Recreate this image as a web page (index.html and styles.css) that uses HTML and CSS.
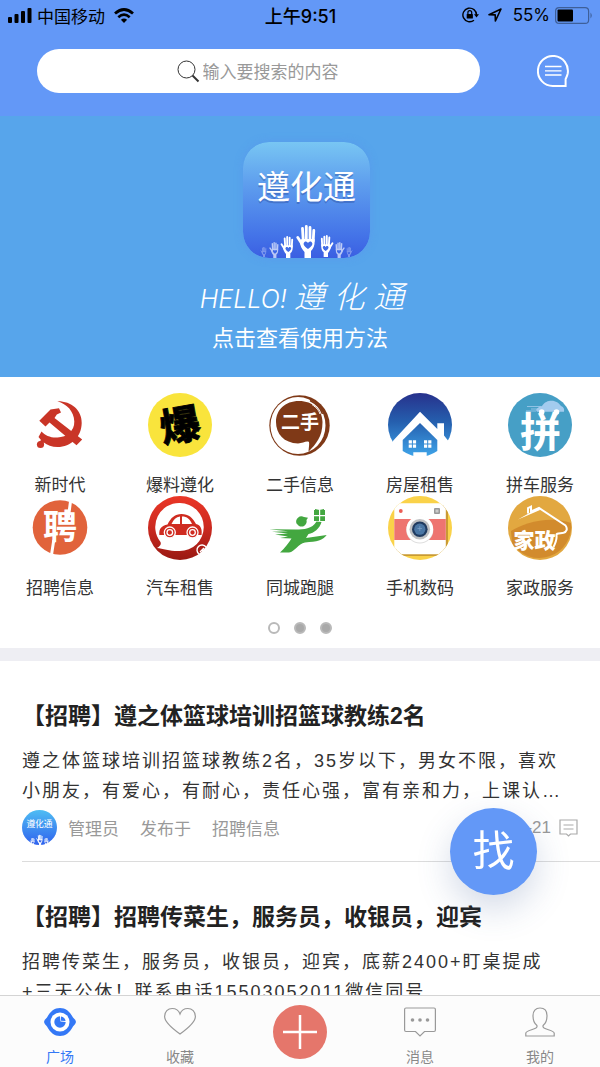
FILE: index.html
```html
<!DOCTYPE html>
<html lang="zh-CN">
<head>
    <meta charset="UTF-8">
    <meta name="viewport" content="width=device-width, initial-scale=1.0">
    <title>遵化通</title>
    <link rel="stylesheet" href="styles.css">
</head>
<body>
    <!-- Shared shapes -->
    <svg class="defs" width="0" height="0" aria-hidden="true">
        <defs>
            <linearGradient id="logoBg" x1="0" y1="0" x2="0" y2="1">
                <stop offset="0" stop-color="#78c6f3"/>
                <stop offset="0.35" stop-color="#5f9fee"/>
                <stop offset="0.8" stop-color="#4474e8"/>
                <stop offset="1" stop-color="#3b5fe2"/>
            </linearGradient>
            <linearGradient id="avatarBg" x1="0" y1="0" x2="0" y2="1">
                <stop offset="0" stop-color="#4fbdf3"/>
                <stop offset="1" stop-color="#2f62ee"/>
            </linearGradient>
            <linearGradient id="houseBg" gradientUnits="userSpaceOnUse" x1="0" y1="0" x2="0" y2="64">
                <stop offset="0" stop-color="#27318c"/>
                <stop offset="0.45" stop-color="#255fae"/>
                <stop offset="1" stop-color="#3fa5ea"/>
            </linearGradient>
            <linearGradient id="carBg" x1="0" y1="0" x2="0" y2="1">
                <stop offset="0" stop-color="#ea3626"/>
                <stop offset="0.5" stop-color="#cb2a20"/>
                <stop offset="1" stop-color="#991812"/>
            </linearGradient>
            <symbol id="hand" viewBox="0 0 20 33">
                <path d="M1.800 12.500L6 19M6.500 3.500L7.200 15M10.300 1.500V14M14 2.500V14M17.800 5.500L17.200 16" fill="none" stroke="#fff" stroke-width="2.800" stroke-linecap="round"/>
                <path d="M5.500 14H18.600C19 20 18 23 15 26V33H8.500V27C6 24 4 21 4 17Z" fill="#fff"/>
                <path d="M12 24C8 21.500 6.500 18.500 8.500 17C10 16 11.500 17 12 18.200C12.500 17 14 16 15.500 17C17.500 18.500 16 21.500 12 24Z" fill="#416ce6"/>
            </symbol>
            <clipPath id="round"><circle cx="32" cy="32" r="32"/></clipPath>
        </defs>
    </svg>

    <div class="app">
        <header class="header">
            <div class="status-bar">
                <div class="status-left">
                    <svg width="24" height="16" viewBox="0 0 24 16">
                        <rect x="0" y="10" width="4" height="6" rx="1"/>
                        <rect x="6.500" y="7" width="4" height="9" rx="1"/>
                        <rect x="13" y="4" width="4" height="12" rx="1"/>
                        <rect x="19.500" y="1" width="4" height="15" rx="1"/>
                    </svg>
                    <span>中国移动</span>
                    <svg class="wifi" width="20" height="15" viewBox="0 0 20 15">
                        <path d="M1 5.500Q10 -2.500 19 5.500" fill="none" stroke="#000" stroke-width="2.800"/>
                        <path d="M4.300 9.200Q10 4 15.700 9.200" fill="none" stroke="#000" stroke-width="2.600"/>
                        <path d="M6.900 11.800Q10 9 13.100 11.800L10 15Z"/>
                    </svg>
                </div>
                <div class="status-time">上午9:51</div>
                <div class="status-right">
                    <svg width="17" height="16" viewBox="0 0 17 16">
                        <path d="M14.500 8A6.800 6.800 0 1 0 12 13.200" fill="none" stroke="#000" stroke-width="1.400"/>
                        <path d="M12 7.300H17L14.500 10.500Z"/>
                        <rect x="4.700" y="7" width="6.200" height="4.600" rx="0.600"/>
                        <path d="M5.900 7V5.600A1.900 1.900 0 0 1 9.700 5.600V7" fill="none" stroke="#000" stroke-width="1.200"/>
                    </svg>
                    <svg class="locate" width="14" height="14" viewBox="0 0 14 14">
                        <path d="M1 6.800L13 1L7.400 13L7.200 6.900Z" fill="none" stroke="#000" stroke-width="1.600" stroke-linejoin="round"/>
                    </svg>
                    <span class="percent">55%</span>
                    <svg width="38" height="17" viewBox="0 0 38 17">
                        <rect x="0.600" y="0.600" width="33" height="15.800" rx="3.500" fill="none" stroke="#3e5f99" stroke-width="1.200"/>
                        <rect x="2.500" y="2.500" width="15.500" height="12" rx="1"/>
                        <path d="M35.500 5.500Q38 8.500 35.500 11.500Z" fill="#3e5f99"/>
                    </svg>
                </div>
            </div>
            <div class="search-row">
                <label class="search">
                    <svg width="23" height="23" viewBox="0 0 23 23" fill="none" stroke="#333">
                        <circle cx="9.500" cy="9.500" r="8.500" stroke-width="1"/>
                        <path d="M15.500 15.500L21.500 21.500" stroke-width="1.900"/>
                    </svg>
                    <input class="search-input" type="text" placeholder="输入要搜索的内容" aria-label="搜索">
                </label>
                <button class="msg-btn" aria-label="消息">
                    <svg width="32" height="32" viewBox="0 0 32 32" fill="none" stroke="#fff">
                        <path d="M16 31A15 15 0 1 1 30.700 18.500C30.200 21 29.200 22.800 28.600 24.200V31Z" stroke-width="2"/>
                        <path d="M8 11.500H24.500M8 15.800H24.500M8 20H24.500" stroke-width="1.300"/>
                    </svg>
                </button>
            </div>
        </header>

        <main class="content">
            <a class="banner" href="#">
                <svg class="banner-logo" width="127" height="116" viewBox="0 0 127 116">
                    <rect width="127" height="116" rx="26" fill="url(#logoBg)"/>
                    <text class="logo-shadow" x="63.500" y="59" text-anchor="middle" font-size="33">遵化通</text>
                    <text x="63.500" y="57" text-anchor="middle" font-size="33" fill="#fff">遵化通</text>
                    <use href="#hand" x="53" y="83" width="20" height="33"/>
                    <use href="#hand" x="37" y="94" width="14" height="22"/>
                    <use href="#hand" x="-91" y="93" width="14" height="22" transform="scale(-1 1)"/>
                    <use href="#hand" x="26" y="100" width="10" height="16" opacity="0.650"/>
                    <use href="#hand" x="-102" y="100" width="10" height="16" transform="scale(-1 1)" opacity="0.650"/>
                    <use href="#hand" x="17" y="105" width="7" height="10" opacity="0.350"/>
                    <use href="#hand" x="-110" y="105" width="7" height="10" transform="scale(-1 1)" opacity="0.350"/>
                </svg>
                <div class="banner-hello">HELLO! <span>遵 化 通</span></div>
                <div class="banner-tip">点击查看使用方法</div>
            </a>

            <section class="menu">
                <nav class="menu-grid">
                    <a class="menu-item" href="#">
                        <svg viewBox="0 0 64 64" fill="#c93527">
                            <path d="M29.300 8.300C43 8 54 17 53.700 30C53.500 44 43 54 29.500 54C24 54 19 52 15.800 49.500L12 54L9.500 51L13 47L10.500 44L13.500 38.500C17 42.500 23 45 29.500 44.500C39 44 46.500 38 46.300 28.500C46 18.500 39 11 29.300 8.300Z"/>
                            <circle cx="12.500" cy="51.500" r="3.600"/>
                            <path d="M11.300 27.700L22.500 16.500L31 15.200L33 19.500L28.800 21.500L26.500 25L54.200 46.500L48.500 52.300L21.500 29.500L17.500 33.500Z"/>
                        </svg>
                        <span>新时代</span>
                    </a>
                    <a class="menu-item" href="#">
                        <svg viewBox="0 0 64 64">
                            <circle cx="32" cy="32" r="32" fill="#f9e43c"/>
                            <text x="32" y="47" text-anchor="middle" font-size="40" font-weight="900" stroke="#000" stroke-width="0.800" transform="rotate(-10 32 32)">爆</text>
                        </svg>
                        <span>爆料遵化</span>
                    </a>
                    <a class="menu-item" href="#">
                        <svg viewBox="0 0 64 64">
                            <circle cx="31.500" cy="32.500" r="30.200" fill="#7f3917"/>
                            <ellipse cx="30" cy="32.500" rx="27.500" ry="28.500" fill="#fff"/>
                            <path d="M31 8C45 8 54.500 17 54.500 29C54.500 44 48 51 40.500 58.700C40.800 54 41.500 51.500 41 49C38 47.500 35 50.500 30 50.500C16 50 8 41 8 29C8 17 17 8 31 8Z" fill="#7f3917"/>
                            <path d="M42 7.500C49 11 53 16 54.500 21" fill="none" stroke="#7f3917" stroke-width="1.500"/>
                            <path d="M44 11.500C49 15 51 18 52 21" fill="none" stroke="#fff" stroke-width="1"/>
                            <text x="32" y="36" text-anchor="middle" font-size="19" font-weight="700" fill="#fff">二手</text>
                        </svg>
                        <span>二手信息</span>
                    </a>
                    <a class="menu-item" href="#">
                        <svg viewBox="0 0 64 64">
                            <circle cx="32" cy="32" r="32" fill="url(#houseBg)"/>
                            <path d="M32 18.700L49.300 36V30.300H56V42.500L61 48.700L64 64H0L5.300 47.500Z" fill="#fff"/>
                            <path d="M32 30L49.300 47V58Q41 63.500 32 64Q23 63.500 14.700 58V47Z" fill="url(#houseBg)"/>
                            <path d="M0 64L2 50L7 50L8 52V64ZM64 64V50H60V64Z" fill="#fff"/>
                            <path d="M20.700 47.300h3.200v3.200h-3.200zM24.900 47.300h3.200v3.200h-3.200zM20.700 51.500h3.200v3.200h-3.200zM24.900 51.500h3.200v3.200h-3.200zM36 47.300h3.200v3.200h-3.200zM40.200 47.300h3.200v3.200h-3.200zM36 51.500h3.200v3.200h-3.200zM40.200 51.500h3.200v3.200h-3.200zM25.300 59.300h13.400V64h-13.400z" fill="#fff"/>
                        </svg>
                        <span>房屋租售</span>
                    </a>
                    <a class="menu-item" href="#">
                        <svg viewBox="0 0 64 64">
                            <circle cx="32" cy="32" r="32" fill="#469fc6"/>
                            <text x="32.500" y="54" text-anchor="middle" font-size="41" font-weight="700" fill="#fff">拼</text>
                            <path d="M28 17C29 14.500 32 13.500 34 13C36.500 9 40 7.700 43.500 7.700C48 7.700 51 10 53 13C56 14 56.500 16.500 56 18.700H29Z" fill="#a3cbee"/>
                            <path d="M19 13.500H33M23 16H30M18 18H28" stroke="#a3cbee" stroke-width="0.800"/>
                            <circle cx="33.700" cy="19" r="2.800" fill="#fff"/>
                            <circle cx="48.500" cy="19" r="2.800" fill="#fff"/>
                        </svg>
                        <span>拼车服务</span>
                    </a>
                    <a class="menu-item" href="#">
                        <svg viewBox="0 0 64 64">
                            <circle cx="32" cy="31.500" r="27.300" fill="#e1633b"/>
                            <path d="M42.700 4L40.300 22M25.800 44L23.300 60" stroke="#fff" stroke-width="3"/>
                            <text x="32" y="43" text-anchor="middle" font-size="34" font-weight="700" fill="#fff">聘</text>
                        </svg>
                        <span>招聘信息</span>
                    </a>
                    <a class="menu-item" href="#">
                        <svg viewBox="0 0 64 64">
                            <circle cx="32" cy="32" r="32" fill="url(#carBg)"/>
                            <path d="M32 7A24 24 0 1 1 31.500 55C23 55.500 15 52.500 9 52C12 50 13.500 48.500 12.500 46A24 24 0 0 1 32 7Z" fill="#fff"/>
                            <path d="M11.300 39C11 32 13.500 30 19.500 28.500C23 21.500 27 18 33.500 18C40.500 18 44.500 21.500 48 28C52.500 29 54.500 33 53.500 39Z" fill="#cf2b20"/>
                            <path d="M23.500 28C25.500 23.500 28 21 32 20.500V28ZM34 20.500C39 20.500 42 23 44 28H34Z" fill="#fff"/>
                            <g fill="#cf2b20" stroke="#fff" stroke-width="1.300">
                                <circle cx="21.800" cy="36.500" r="5.500"/>
                                <circle cx="44.500" cy="36.500" r="5.500"/>
                                <circle cx="21.800" cy="36.500" r="2.800"/>
                                <circle cx="44.500" cy="36.500" r="2.800"/>
                            </g>
                            <path d="M51 58A5 5 0 1 1 58 51M52 56L56 52M54 55L57 54" fill="none" stroke="#fff" stroke-width="1.400"/>
                        </svg>
                        <span>汽车租售</span>
                    </a>
                    <a class="menu-item" href="#">
                        <svg viewBox="0 0 64 64" fill="#43a740">
                            <path d="M28.500 27.500A5.300 5.300 0 0 1 36 21L40 21.800L38.500 24A5.300 5.300 0 0 1 31 30Z"/>
                            <path d="M46 14H51V19H46ZM52.200 14H57V19H52.200ZM46 20.200H51V25H46ZM52.200 20.200H57V25H52.200ZM47 13L51.500 14L56 13V14H47Z"/>
                            <path d="M1.300 33.200L28 33.500C36 33.500 44 33 48.500 25.500L53.500 26C51.500 33 46 37 40.500 38L38 42L58.700 39C55 44.500 49 45.500 37 46.500C30 47.500 27 56 21 56.400H12C17 52 21 46.500 23.500 42.500L12 42L20 40.500L7 38.500L20 37.500L4 35.800L20 35.300Z"/>
                        </svg>
                        <span>同城跑腿</span>
                    </a>
                    <a class="menu-item" href="#">
                        <svg viewBox="0 0 64 64">
                            <g clip-path="url(#round)">
                                <rect width="64" height="64" fill="#fad249"/>
                                <rect x="8" y="9" width="52" height="51" rx="4" fill="#c99a34"/>
                                <rect x="6.300" y="7.300" width="51.500" height="51" rx="4" fill="#fff"/>
                                <rect x="6.300" y="23" width="51.500" height="21" fill="#ee7470"/>
                            </g>
                            <circle cx="31.800" cy="34" r="13.500" fill="#ddd"/>
                            <circle cx="31.800" cy="33.200" r="13.300" fill="#fff"/>
                            <circle cx="31.800" cy="33.200" r="10.300" fill="#bfc0c2"/>
                            <circle cx="31.800" cy="33.200" r="7.800" fill="#203b60"/>
                            <circle cx="31.800" cy="33.200" r="5.600" fill="#4a76a4"/>
                            <path d="M29.500 32.500H34M31.800 30V35" stroke="#7ba0c6" stroke-width="0.800"/>
                            <circle cx="12.800" cy="15" r="1.900" fill="#ec5d55"/>
                            <rect x="46" y="12" width="6" height="6" rx="1" fill="#999"/>
                            <rect x="47.500" y="13.500" width="3" height="3" fill="#ccc"/>
                        </svg>
                        <span>手机数码</span>
                    </a>
                    <a class="menu-item" href="#">
                        <svg viewBox="0 0 64 64">
                            <circle cx="32" cy="32" r="32" fill="#e2a840"/>
                            <path d="M3 35C15 27 42 19 63 27A32 32 0 0 1 4 47Z" fill="#d28b2d" clip-path="url(#round)"/>
                            <path d="M20 17.500V12L23 10.500V15.500L31 12L57.500 29.500C60 33 58.500 36 55.500 36.800C51 37.500 48 37 48.500 39.500C49 43 47 48 45.500 51" fill="none" stroke="#fff" stroke-width="2"/>
                            <path d="M10 23.500L31 11.500L32 14Z" fill="#fff"/>
                            <text x="26.500" y="51.500" text-anchor="middle" font-size="21" font-weight="900" fill="#fff">家政</text>
                        </svg>
                        <span>家政服务</span>
                    </a>
                </nav>
                <div class="dots">
                    <span class="dot current"></span>
                    <span class="dot"></span>
                    <span class="dot"></span>
                </div>
            </section>

            <section class="feed">
                <article class="post">
                    <h2 class="post-title">【招聘】遵之体篮球培训招篮球教练2名</h2>
                    <p class="post-text">遵之体篮球培训招篮球教练2名，35岁以下，男女不限，喜欢<br>小朋友，有爱心，有耐心，责任心强，富有亲和力，上课认…</p>
                    <div class="post-meta">
                        <svg class="avatar" width="35" height="35" viewBox="0 0 64 64">
                            <g clip-path="url(#round)">
                                <rect width="64" height="64" fill="url(#avatarBg)"/>
                                <text x="32" y="31" text-anchor="middle" font-size="16" fill="#fff">遵化通</text>
                                <use href="#hand" x="25" y="45" width="14" height="20"/>
                                <use href="#hand" x="14" y="51" width="10" height="14"/>
                                <use href="#hand" x="-50" y="51" width="10" height="14" transform="scale(-1 1)"/>
                            </g>
                        </svg>
                        <span>管理员</span>
                        <span>发布于</span>
                        <span>招聘信息</span>
                        <span class="post-date">-21</span>
                        <svg class="comment" width="19" height="18" viewBox="0 0 19 18" fill="none" stroke="#aaa" stroke-width="1.200">
                            <path d="M1 1H18V15H11.500L9.500 17L7.500 15H1Z"/>
                            <path d="M4.500 6H14.500M4.500 10H14.500"/>
                        </svg>
                    </div>
                </article>
                <article class="post">
                    <h2 class="post-title">【招聘】招聘传菜生，服务员，收银员，迎宾</h2>
                    <p class="post-text">招聘传菜生，服务员，收银员，迎宾，底薪2400+盯桌提成<br>+三天公休！联系电话15503052011微信同号</p>
                </article>
            </section>
        </main>

        <nav class="tab-bar">
            <a class="tab active" href="#">
                <svg width="32" height="30" viewBox="0 0 32 30">
                    <path d="M0 15Q0.500 12.500 3 10.500C6.500 4 10.500 1 16 1C21.500 1 25.500 4 29 10.500Q31.500 12.500 32 15Q31.500 17.500 29 19.500C25.500 26 21.500 29 16 29C10.500 29 6.500 26 3 19.500Q0.500 17.500 0 15Z" fill="#3478f6"/>
                    <circle cx="16" cy="15" r="9.500" fill="#fff"/>
                    <path d="M16 9.300A5.700 5.700 0 1 0 21.700 15L16.500 14.500Z" fill="#3478f6"/>
                    <path d="M17 9.400A5.700 5.700 0 0 1 21.600 14L17 13.700Z" fill="#3478f6"/>
                </svg>
                <span>广场</span>
            </a>
            <a class="tab" href="#">
                <svg width="32" height="30" viewBox="0 0 32 30" fill="none" stroke="#999" stroke-width="1.200">
                    <path d="M16 27C9 22 0.600 15.500 0.600 9.500C0.600 4.500 4 1.500 8.200 1.500C11.800 1.500 14.800 3.800 16 7C17.200 3.800 20.200 1.500 23.800 1.500C28 1.500 31.400 4.500 31.400 9.500C31.400 15.500 23 22 16 27Z"/>
                </svg>
                <span>收藏</span>
            </a>
            <button class="add-btn" aria-label="发布">
                <svg width="34" height="34" viewBox="0 0 34 34" stroke="#fff" stroke-width="2.500">
                    <path d="M17 0V34M0 17H34"/>
                </svg>
            </button>
            <a class="tab" href="#">
                <svg width="32" height="30" viewBox="0 0 32 30" fill="none" stroke="#999" stroke-width="1.200">
                    <path d="M2 1H30Q31.400 1 31.400 2.500V23Q31.400 24.500 30 24.500H20.500L16 29L11.500 24.500H2Q0.600 24.500 0.600 23V2.500Q0.600 1 2 1Z"/>
                    <g fill="#999" stroke="none">
                        <circle cx="8.500" cy="13" r="1.800"/>
                        <circle cx="16" cy="13" r="1.800"/>
                        <circle cx="23.500" cy="13" r="1.800"/>
                    </g>
                </svg>
                <span>消息</span>
            </a>
            <a class="tab" href="#">
                <svg width="32" height="30" viewBox="0 0 32 30" fill="none" stroke="#999" stroke-width="1.200">
                    <path d="M16 1C20.500 1 23 4 23 8.500C23 13 21.500 16.500 19.500 18C18.500 19 19 20.500 20 21C23.500 22.800 30 24 30.200 26V29H1.800V26C2 24 8.500 22.800 12 21C13 20.500 13.500 19 12.500 18C10.500 16.500 9 13 9 8.500C9 4 11.500 1 16 1Z"/>
                </svg>
                <span>我的</span>
            </a>
        </nav>

        <button class="find-btn">找</button>
    </div>
</body>
</html>
```

FILE: styles.css
```css
* {
    margin: 0;
    padding: 0;
    box-sizing: border-box;
}

body {
    font-family: 'Liberation Sans', 'Noto Sans CJK SC', sans-serif;
    font-size: 17px;
    color: #333;
    background: #fff;
}

a {
    color: inherit;
    text-decoration: none;
}

button {
    border: none;
    font-family: inherit;
    cursor: pointer;
}

svg {
    display: block;
    flex-shrink: 0;
}

.defs {
    position: absolute;
}

.app {
    height: 100vh;
    display: flex;
    flex-direction: column;
}

/* Header */
.header {
    background: #6398f7;
    padding-bottom: 23px;
}

.status-bar {
    display: grid;
    grid-template-columns: 1fr auto 1fr;
    align-items: center;
    height: 30px;
    padding: 0 7px 0 8px;
    color: #000;
}

.status-left,
.status-right {
    display: flex;
    align-items: center;
    gap: 5px;
}

.status-left .wifi {
    margin-left: 4px;
}

.status-right {
    justify-content: flex-end;
}

.locate {
    margin: 0 6px 0 4px;
}

.status-time,
.percent {
    font-family: Inter, 'Noto Sans CJK SC', sans-serif;
}

.status-time {
    font-size: 18px;
    font-weight: 500;
}

.search-row {
    display: flex;
    align-items: center;
    gap: 57px;
    padding: 19px 31px 0 37px;
}

.search {
    flex: 1;
    display: flex;
    align-items: center;
    justify-content: center;
    gap: 3px;
    height: 44px;
    border-radius: 22px;
    background: #fff;
}

.search-input {
    width: 138px;
    height: 32px;
    padding-top: 4px;
    border: none;
    outline: none;
    background: none;
    font: inherit;
    color: #333;
}

.search-input::placeholder {
    color: #999;
}

.msg-btn {
    background: none;
}

/* Scrolling area */
.content {
    flex: 1;
    min-height: 0;
    overflow-y: auto;
    scrollbar-width: none;
}

.banner {
    display: flex;
    flex-direction: column;
    align-items: center;
    height: 261px;
    padding-top: 26px;
    background: #57a5eb;
    color: #fff;
}

.banner-logo {
    margin-left: 12px;
    border-radius: 26px;
    box-shadow: 0 0 8px rgba(90, 140, 240, 0.4);
}

.logo-shadow {
    fill: rgba(40, 70, 150, 0.4);
}

.banner-hello {
    margin: 18px 0 0 4px;
    font-family: Inter, 'Noto Sans CJK SC', sans-serif;
    font-size: 25px;
    font-weight: 300;
    font-style: italic;
    line-height: 42px;
}

.banner-hello span {
    font-size: 31px;
}

.banner-tip {
    font-size: 22px;
    line-height: 38px;
}

/* Category menu */
.menu {
    padding: 16px 0 14px;
    border-bottom: 13px solid #eeeef3;
}

.menu-grid {
    display: grid;
    grid-template-columns: repeat(5, 1fr);
}

.menu-item {
    display: flex;
    flex-direction: column;
    align-items: center;
    gap: 19px;
    line-height: 20px;
}

.menu-item svg {
    width: 64px;
    height: 64px;
}

.dots {
    display: flex;
    justify-content: center;
    gap: 14px;
    padding-top: 23px;
}

.dot {
    width: 12px;
    height: 12px;
    border: 2px solid #b9b9b9;
    border-radius: 50%;
    background: #a9a9a9;
}

.dot.current {
    background: #fff;
}

/* Posts */
.post {
    margin-left: 22px;
    padding: 39px 22px 16px 0;
    border-bottom: 1px solid #dcdcdc;
}

.post-title {
    font-size: 23px;
    font-weight: 700;
    line-height: 32px;
    color: #222;
}

.post-text {
    margin-top: 14px;
    font-size: 18px;
    line-height: 30px;
    letter-spacing: 2px;
    white-space: nowrap;
}

.post-meta {
    display: flex;
    align-items: center;
    gap: 21px;
    margin-top: 4px;
    color: #999;
}

.avatar {
    margin-right: -10px;
}

.post-date {
    margin-left: auto;
}

.comment {
    margin-left: -13px;
}

/* Bottom tabs */
.tab-bar {
    display: grid;
    grid-template-columns: repeat(5, 1fr);
    height: 72px;
    border-top: 1px solid #d4d4d4;
    background: #fcfcfc;
}

.tab {
    display: flex;
    flex-direction: column;
    align-items: center;
    gap: 10px;
    padding-top: 11px;
    font-size: 14px;
    line-height: 20px;
    color: #888;
}

.tab.active {
    color: #3478f6;
}

.add-btn {
    display: flex;
    align-items: center;
    justify-content: center;
    place-self: center;
    width: 54px;
    height: 54px;
    border-radius: 50%;
    background: #e5766b;
}

/* Floating button over the feed */
.find-btn {
    position: fixed;
    right: 63px;
    bottom: 172px;
    width: 87px;
    height: 87px;
    border-radius: 50%;
    background: #6398f7;
    box-shadow: 0 14px 34px rgba(60, 90, 150, 0.22);
    color: #fff;
    font-size: 42px;
    line-height: 87px;
}
```
